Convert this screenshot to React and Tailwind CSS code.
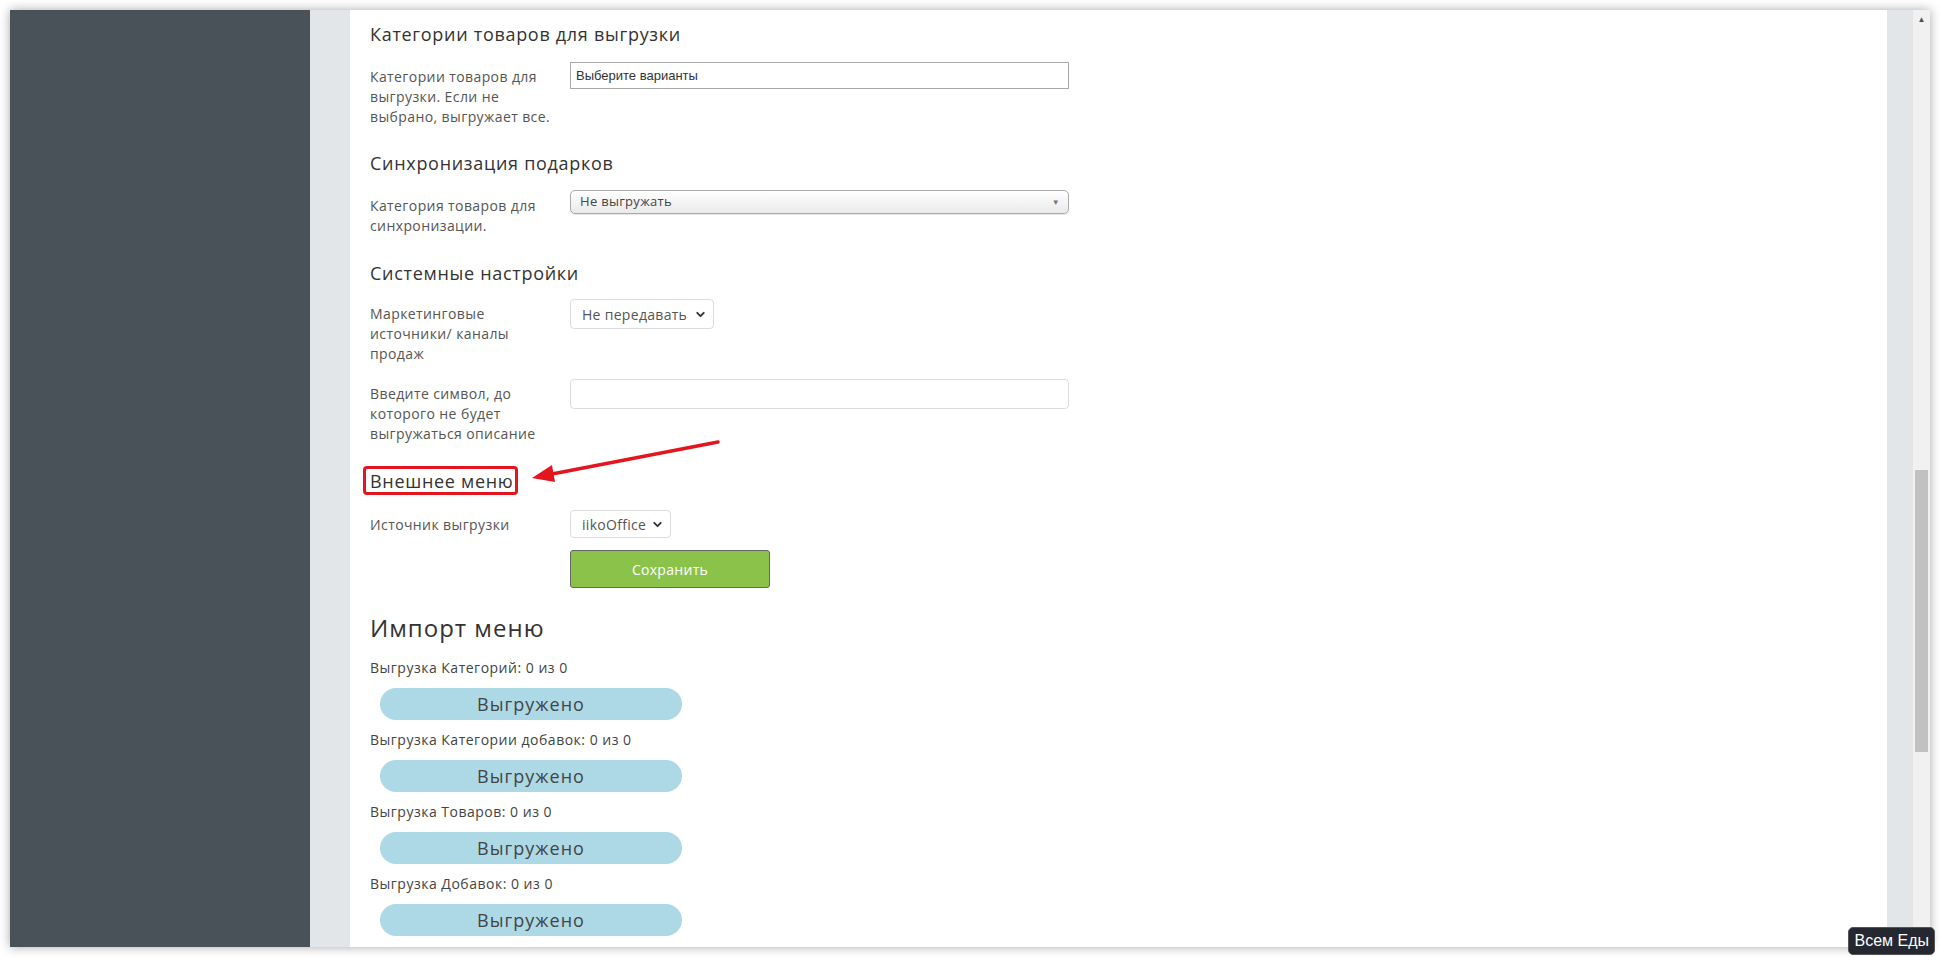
import { ChevronDown } from 'lucide-react';

const font = { fontFamily: '"Open Sans", "Noto Sans", sans-serif' };

function Label({ children, pt = 'pt-[5px]' }) {
  return (
    <div className={`w-[200px] shrink-0 pr-[12px] ${pt} text-[14px] leading-[20px] tracking-[0.4px] text-[#555]`}>
      {children}
    </div>
  );
}

function Heading({ children, className = '' }) {
  return (
    <h3 className={`text-[18px] leading-[24px] tracking-[0.7px] text-[#333] ${className}`}>{children}</h3>
  );
}

function NativeSelect({ value, width }) {
  return (
    <div
      className={`flex items-center justify-between rounded-[4px] border border-[#dcdcdc] bg-white pl-[11px] pr-[6px] text-[14px] tracking-[0.3px] text-[#555] ${width}`}
    >
      <span>{value}</span>
      <ChevronDown size={13} strokeWidth={3.5} className="text-[#333]" />
    </div>
  );
}

const imports = [
  'Выгрузка Категорий: 0 из 0',
  'Выгрузка Категории добавок: 0 из 0',
  'Выгрузка Товаров: 0 из 0',
  'Выгрузка Добавок: 0 из 0',
];

export default function App() {
  return (
    <div className="relative h-screen w-full overflow-hidden bg-white p-[10px]" style={font}>
      <div className="flex h-full shadow-[0_0_10px_rgba(0,0,0,0.35)]">
        <aside className="w-[300px] shrink-0 bg-[#4a5259]" />
        <div className="w-[40px] shrink-0 bg-[#e2e6e9]" />

        <main className="relative flex-1 overflow-hidden bg-white pl-[20px] pt-[12px]">
          <Heading>Категории товаров для выгрузки</Heading>
          <div className="mt-[16px] flex items-start">
            <Label>Категории товаров для выгрузки. Если не выбрано, выгружает все.</Label>
            <div
              className="flex h-[27px] w-[499px] items-center border border-[#aaa] bg-white px-[5px] text-[13px] text-[#333]"
              style={{ fontFamily: '"Liberation Sans", Arial, sans-serif' }}
            >
              Выберите варианты
            </div>
          </div>

          <Heading className="mt-[24px]">Синхронизация подарков</Heading>
          <div className="mt-[15px] flex items-start">
            <Label pt="pt-[6px]">Категория товаров для синхронизации.</Label>
            <div className="flex h-[24px] w-[499px] items-center justify-between rounded-[5px] border border-[#aaa] bg-gradient-to-b from-white to-[#eaeaea] pl-[9px] pr-[8px] text-[13px] tracking-[0.3px] text-[#444] shadow-[0_1px_1px_rgba(0,0,0,0.1)]">
              <span>Не выгружать</span>
              <span className="text-[8px] text-[#777]">▼</span>
            </div>
          </div>

          <Heading className="mt-[25px]">Системные настройки</Heading>
          <div className="mt-[14px] flex items-start">
            <Label>Маркетинговые источники/ каналы продаж</Label>
            <NativeSelect value="Не передавать" width="h-[30px] w-[144px]" />
          </div>
          <div className="mt-[15px] flex items-start">
            <Label>Введите символ, до которого не будет выгружаться описание</Label>
            <div className="h-[30px] w-[499px] rounded-[4px] border border-[#dcdcdc] bg-white" />
          </div>

          <div className="mt-[25px]">
            <Heading className="relative inline-block">
              Внешнее меню
              <span className="absolute bottom-[-2px] left-[-7px] right-[-5px] top-[-3px] rounded-[4px] border-[3px] border-[#e3161f]" />
            </Heading>
          </div>
          <div className="mt-[16px] flex items-start">
            <Label>Источник выгрузки</Label>
            <NativeSelect value="iikoOffice" width="h-[28px] w-[101px]" />
          </div>
          <div className="mt-[12px] pl-[200px]">
            <button className="h-[38px] w-[200px] rounded-[3px] border border-[#666] bg-[#8bc34a] text-[14px] tracking-[0.3px] text-white">
              Сохранить
            </button>
          </div>

          <h2 className="mt-[24px] text-[24px] leading-[32px] tracking-[1px] text-[#333]">Импорт меню</h2>
          <div className="mt-[14px]">
            {imports.map((label) => (
              <div key={label} className="mb-[10px]">
                <div className="text-[14px] leading-[20px] tracking-[0.5px] text-[#444]">{label}</div>
                <div className="ml-[10px] mt-[10px] flex h-[32px] w-[302px] items-center justify-center rounded-full bg-[#add8e6] text-[18px] tracking-[1px] text-[#444]">
                  Выгружено
                </div>
              </div>
            ))}
          </div>

          <svg className="absolute left-[170px] top-[420px]" width="210" height="60" viewBox="0 0 210 60">
            <line x1="198" y1="12" x2="32" y2="44" stroke="#e3161f" strokeWidth="3.5" strokeLinecap="round" />
            <polygon points="12,48 35,52 32,35" fill="#e3161f" />
          </svg>
        </main>

        <div className="w-[26px] shrink-0 bg-[#e2e6e9]" />
        <div className="flex w-[17px] shrink-0 flex-col items-center bg-[#f1f1f1]">
          <span className="mt-[4px] text-[8px] leading-[10px] text-[#505050]">▲</span>
          <div className="mt-[446px] h-[282px] w-[13px] bg-[#c1c1c1]" />
        </div>
      </div>

      <div
        className="absolute bottom-[2px] right-[5px] rounded-[5px] border border-[#555] bg-[#252830] px-[5px] py-[3px] text-[16px] leading-[20px] text-white"
        style={{ fontFamily: '"Liberation Sans", Arial, sans-serif' }}
      >
        Всем Еды
      </div>
    </div>
  );
}
